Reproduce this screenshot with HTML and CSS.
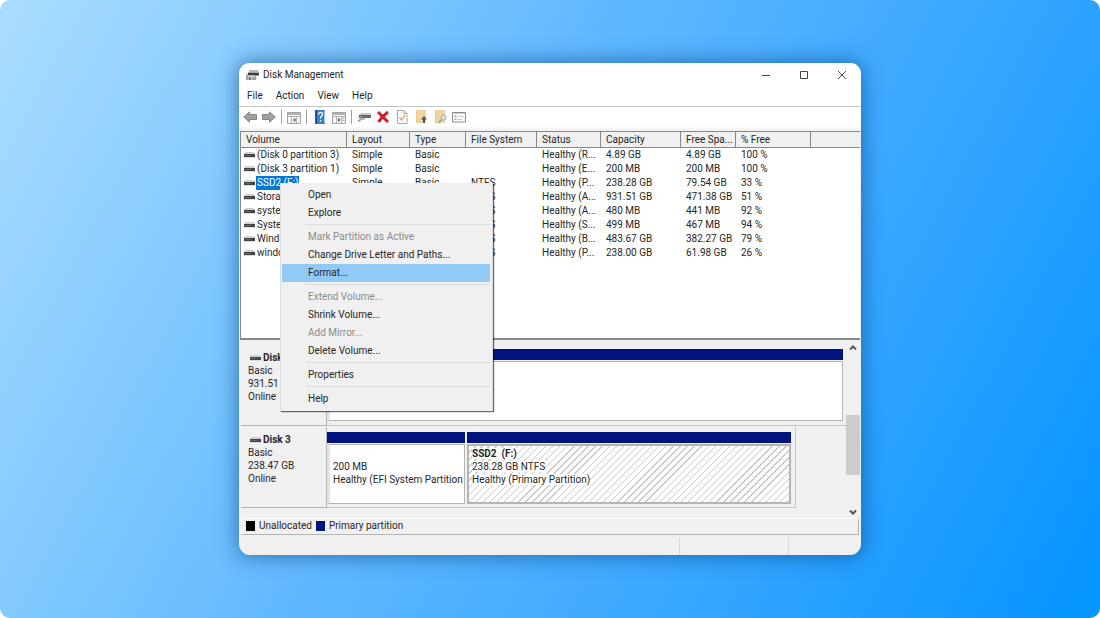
FILE: index.html
```html
<!DOCTYPE html>
<html lang="en">
<head>
<meta charset="utf-8">
<title>Disk Management</title>
<link rel="stylesheet" href="styles.css">
</head>
<body>
<svg width="0" height="0" class="defs" aria-hidden="true">
  <symbol id="drive" viewBox="0 0 11 6"><path d="M1 0h9l1 2H0z" fill="#d0d0d0"/><rect y="2" width="11" height="3" fill="#444"/><rect x="1" y="3" width="6" height="1" fill="#666"/><rect y="5" width="11" height="1" fill="#ddd"/></symbol>
</svg>
<main class="stage">
<div class="window">
  <header class="titlebar">
    <svg class="app-icon" viewBox="0 0 14 12"><path d="M4 0h9l1 3H2z" fill="#b9b9b9"/><path d="M2 3h12v3H2z" fill="#3d3d3d"/><path d="M1 6h9v5H1z" fill="#d4d4d4"/><path d="M0 5h2v6H0zM9 6h2v5H9z" fill="#9c9c9c"/><path d="M3 8h2v3H3zM7 8h1v3H7z" fill="#5a5a5a"/></svg>
    <h1 class="title">Disk Management</h1>
    <div class="controls">
      <button class="control" aria-label="Minimize"><svg viewBox="0 0 10 10"><path d="M1 5.5h8" /></svg></button>
      <button class="control" aria-label="Maximize"><svg viewBox="0 0 10 10"><path d="M1.5 1.5h7v7h-7z"/></svg></button>
      <button class="control" aria-label="Close"><svg viewBox="0 0 10 10"><path d="M1 1l8 8M9 1l-8 8"/></svg></button>
    </div>
  </header>
  <nav class="menubar">
    <button>File</button><button>Action</button><button>View</button><button>Help</button>
  </nav>
  <div class="toolbar">
    <button aria-label="Back"><svg viewBox="0 0 14 14"><path d="M.7 7 6.500 1.800V4.500h7v5h-7v2.700z" fill="#a0a0a0" stroke="#858585"/></svg></button>
    <button aria-label="Forward"><svg viewBox="0 0 14 14"><path d="M13.300 7 7.500 1.800V4.500h-7v5h7v2.700z" fill="#a0a0a0" stroke="#858585"/></svg></button>
    <span class="divider"></span>
    <button aria-label="Show console tree"><svg viewBox="0 0 14 14"><path d="M.5 2.500h13v11H.5z" fill="#f4f4f4" stroke="#a4a4a4"/><path d="M1 3h12v2H1z" fill="#b4b4b4"/><path d="M1 6.500h12M4.500 7v6M9.500 7v6" stroke="#b4b4b4"/><path d="M8.500 8v4L6 10z" fill="#555"/></svg></button>
    <span class="divider wide"></span>
    <button aria-label="Help topics"><svg viewBox="0 0 14 14"><path d="M2 0h10v14H2z" fill="#3b80c6"/><path d="M2 0h2v14H2z" fill="#24578f"/><path d="M11 1h1v12h-1z" fill="#9bc3e8"/><path d="M5.500 4.500c0-3 4.500-2.500 4 0C9.200 6 7.500 6 7.500 8.500M7.500 10v1.500" fill="none" stroke="#fff" stroke-width="1.300"/></svg></button>
    <button aria-label="Show action pane"><svg viewBox="0 0 14 14"><path d="M.5 2.500h13v11H.5z" fill="#f4f4f4" stroke="#a4a4a4"/><path d="M1 3h12v2H1z" fill="#b4b4b4"/><path d="M1 6.500h12M4.500 7v6M9.500 7v6" stroke="#b4b4b4"/><path d="M6 8v4l2.500-2z" fill="#555"/><path d="M10.500 8.500h2M10.500 10.500h2" stroke="#aaa"/></svg></button>
    <span class="divider"></span>
    <button aria-label="Rescan disks"><svg viewBox="0 0 14 14"><path d="M4 3h9l1 2H2z" fill="#c4c4c4"/><path d="M2 5h12v3H2z" fill="#666"/><path d="M3 6h2v1H3z" fill="#70b8d8"/><path d="M1 11.500 5 8.500h3" fill="none" stroke="#8ba7b3" stroke-width="2"/></svg></button>
    <button aria-label="Delete"><svg viewBox="0 0 14 14"><path d="M2 2c3 3 6 6 10 10M12 2C8 5 5 8 2.500 12" fill="none" stroke="#d01f2e" stroke-width="3"/></svg></button>
    <button aria-label="Properties"><svg viewBox="0 0 14 14"><path d="M2.500.5H9L12 3.500v10H2.500z" fill="#fbfbfb" stroke="#aaa"/><path d="M9 .5v3h3" fill="none" stroke="#aaa"/><path d="M4.500 7.500 6.500 10 10 5" fill="none" stroke="#e0a060" stroke-width="1.300"/></svg></button>
    <button aria-label="Up one level"><svg viewBox="0 0 14 14"><path d="M2 0h10v13H2z" fill="#f0d3a0"/><path d="M2.500 0v13" stroke="#dfbd80" stroke-dasharray="1 1"/><path d="M10 6 13 9.500h-2V13H9V9.500H7z" fill="#555"/></svg></button>
    <button aria-label="Find"><svg viewBox="0 0 14 14"><path d="M2 0h10v13H2z" fill="#f0d3a0"/><path d="M2.500 0v13" stroke="#dfbd80" stroke-dasharray="1 1"/><path d="M8.500 9.500 5.500 13" stroke="#999" stroke-width="1.500"/><circle cx="10.500" cy="7.500" r="2.500" fill="#d6e4ee" stroke="#98acba"/></svg></button>
    <button aria-label="Options"><svg viewBox="0 0 14 14"><path d="M.5 2.500h13v9.500H.5z" fill="#fafafa" stroke="#8c8c8c"/><path d="M1 3h12v1H1z" fill="#c0d0dc"/><path d="M2.500 5.500h2v1.500h-2zM2.500 8.500h2V10h-2z" fill="#6cb0dc"/><path d="M6 6.500h6M6 9.500h4" stroke="#ccc"/></svg></button>
  </div>

  <section class="volumes">
    <table>
      <colgroup><col class="c-vol"><col class="c-lay"><col class="c-type"><col class="c-fs"><col class="c-stat"><col class="c-cap"><col class="c-free"><col class="c-pct"><col></colgroup>
      <thead><tr><th>Volume</th><th>Layout</th><th>Type</th><th>File System</th><th>Status</th><th>Capacity</th><th>Free Spa...</th><th>% Free</th><th></th></tr></thead>
      <tbody>
        <tr><td><svg class="drive"><use href="#drive"/></svg><span>(Disk 0 partition 3)</span></td><td>Simple</td><td>Basic</td><td></td><td>Healthy (R...</td><td>4.89 GB</td><td>4.89 GB</td><td>100 %</td><td></td></tr>
        <tr><td><svg class="drive"><use href="#drive"/></svg><span>(Disk 3 partition 1)</span></td><td>Simple</td><td>Basic</td><td></td><td>Healthy (E...</td><td>200 MB</td><td>200 MB</td><td>100 %</td><td></td></tr>
        <tr><td><svg class="drive"><use href="#drive"/></svg><span class="selected">SSD2 (F:)</span></td><td>Simple</td><td>Basic</td><td>NTFS</td><td>Healthy (P...</td><td>238.28 GB</td><td>79.54 GB</td><td>33 %</td><td></td></tr>
        <tr><td><svg class="drive"><use href="#drive"/></svg><span>Storage</span></td><td>Simple</td><td>Basic</td><td>NTFS</td><td>Healthy (A...</td><td>931.51 GB</td><td>471.38 GB</td><td>51 %</td><td></td></tr>
        <tr><td><svg class="drive"><use href="#drive"/></svg><span>system</span></td><td>Simple</td><td>Basic</td><td>NTFS</td><td>Healthy (A...</td><td>480 MB</td><td>441 MB</td><td>92 %</td><td></td></tr>
        <tr><td><svg class="drive"><use href="#drive"/></svg><span>System</span></td><td>Simple</td><td>Basic</td><td>NTFS</td><td>Healthy (S...</td><td>499 MB</td><td>467 MB</td><td>94 %</td><td></td></tr>
        <tr><td><svg class="drive"><use href="#drive"/></svg><span>Windows</span></td><td>Simple</td><td>Basic</td><td>NTFS</td><td>Healthy (B...</td><td>483.67 GB</td><td>382.27 GB</td><td>79 %</td><td></td></tr>
        <tr><td><svg class="drive"><use href="#drive"/></svg><span>windows</span></td><td>Simple</td><td>Basic</td><td>NTFS</td><td>Healthy (P...</td><td>238.00 GB</td><td>61.98 GB</td><td>26 %</td><td></td></tr>
      </tbody>
    </table>
  </section>

  <section class="disks">
    <div class="disk-list">
      <div class="disk tall">
        <div class="disk-label"><h2><svg class="drive"><use href="#drive"/></svg>Disk 2</h2><p>Basic</p><p>931.51 GB</p><p>Online</p></div>
        <div class="partitions">
          <div class="partition"><div class="stripe"></div><div class="part-body"></div></div>
        </div>
      </div>
      <div class="disk">
        <div class="disk-label"><h2><svg class="drive"><use href="#drive"/></svg>Disk 3</h2><p>Basic</p><p>238.47 GB</p><p>Online</p></div>
        <div class="partitions">
          <div class="partition efi"><div class="stripe"></div><div class="part-body"><p>&nbsp;</p><p>200 MB</p><p>Healthy (EFI System Partition</p></div></div>
          <div class="partition"><div class="stripe"></div><div class="part-body hatched"><p><b>SSD2&nbsp; (F:)</b></p><p><span>238.28 GB NTFS</span></p><p><span>Healthy (Primary Partition)</span></p></div></div>
        </div>
      </div>
    </div>
    <div class="scrollbar">
      <button aria-label="Scroll up"><svg viewBox="0 0 8 6"><path d="M1 4.500 4 1.500l3 3"/></svg></button>
      <div class="track"><div class="thumb"></div></div>
      <button aria-label="Scroll down"><svg viewBox="0 0 8 6"><path d="M1 1.500l3 3 3-3"/></svg></button>
    </div>
  </section>
  <div class="legend"><i class="swatch black"></i><span>Unallocated</span><i class="swatch"></i><span>Primary partition</span></div>
  <footer class="statusbar"><span></span><span></span><span></span></footer>

  <div class="context-menu" role="menu">
    <button role="menuitem">Open</button>
    <button role="menuitem">Explore</button>
    <hr>
    <button role="menuitem" disabled>Mark Partition as Active</button>
    <button role="menuitem">Change Drive Letter and Paths...</button>
    <button role="menuitem" class="active">Format...</button>
    <hr>
    <button role="menuitem" disabled>Extend Volume...</button>
    <button role="menuitem">Shrink Volume...</button>
    <button role="menuitem" disabled>Add Mirror...</button>
    <button role="menuitem">Delete Volume...</button>
    <hr>
    <button role="menuitem">Properties</button>
    <hr>
    <button role="menuitem">Help</button>
  </div>
</div>
</main>
</body>
</html>
```
FILE: styles.css
```css
* { box-sizing: border-box; }
body { margin: 0; background: #fff; }
h1, h2, p { margin: 0; font-size: inherit; font-weight: normal; }
button { margin: 0; padding: 0; border: 0; background: none; color: inherit; font: inherit; }
svg { display: block; }
.defs { position: absolute; }

.stage {
  display: flex;
  align-items: center;
  justify-content: center;
  min-height: 100vh;
  border-radius: 10px;
  background: linear-gradient(118deg, #aaddff 0%, #62b9ff 42%, #3ba8ff 68%, #0795ff 98%);
}
.window {
  position: relative;
  width: 100%;
  max-width: 622px;
  overflow: hidden;
  border-radius: 11px;
  background: #f0f0f0;
  color: #262626;
  font: 10px/14px Roboto, "Open Sans", sans-serif;
  box-shadow: 0 0 20px 2px rgba(0, 60, 120, .55);
}

.titlebar { display: flex; align-items: center; height: 24px; padding-left: 7px; background: #fff; }
.app-icon { width: 13px; height: 11px; margin-right: 4px; }
.title { flex: 1; }
.controls { display: flex; }
.control { display: grid; place-items: center; width: 38px; height: 24px; }
.control svg { width: 10px; height: 10px; fill: none; stroke: #444; }

.menubar { display: flex; gap: 13px; height: 20px; padding: 0 8px 1px; border-bottom: 1px solid #c4c4c4; background: #fff; }
.toolbar { display: flex; align-items: center; gap: 5px; height: 24px; padding: 0 4px 4px; background: linear-gradient(#fff 75%, #f0f0f0); }
.toolbar svg { width: 14px; height: 14px; }
.divider { width: 1px; height: 14px; background: #a0a0a0; }
.divider.wide { margin-right: 1px; }

.volumes { height: 209px; margin: 0 1px; border: 1px solid #888; border-width: 1px 0 2px 1px; background: #fff; }
table { width: 100%; table-layout: fixed; border-collapse: separate; border-spacing: 0; }
.c-vol { width: 106px; }
.c-lay { width: 63px; }
.c-type { width: 56px; }
.c-fs { width: 71px; }
.c-stat { width: 64px; }
.c-cap { width: 80px; }
.c-free { width: 55px; }
.c-pct { width: 75px; }
th, td { padding: 0 0 0 5px; text-align: left; font-weight: normal; white-space: nowrap; overflow: hidden; }
th { height: 16px; border-right: 1px solid #888; border-bottom: 1px solid #888; background: #f0f0f0; }
th:last-child { border-right: 0; }
td:first-child { display: flex; align-items: center; padding-left: 3px; }
tbody tr { height: 14px; }
.drive { width: 11px; height: 6px; flex: none; }
td span { padding: 0 1px; margin-left: 1px; }
.selected { background: #0078d7; color: #fff; }

.disks { display: flex; height: 178px; padding: 2px 1px 0 2px; }
.disk-list { flex: 1; }
.disk { display: flex; }
.disk + .disk { margin-top: 1px; }
.disk-label { width: 86px; padding: 6px 0 0 7px; border: 1px solid #b5b5b5; border-width: 0 1px 1px 0; line-height: 13px; }
.disk-label h2 { display: flex; align-items: center; gap: 2px; padding-left: 2px; font-weight: bold; }
.partitions { display: flex; gap: 2px; width: 469px; height: 81px; padding: 5px 4px 3px 0; border: 1px solid #c4c4c4; border-width: 0 1px 1px 0; }
.tall .disk-label { padding-top: 9px; }
.tall .partitions { width: auto; flex: 1; height: 84px; padding: 7px 3px 4px 0; border-right: 0; }
.partition { display: flex; flex-direction: column; flex: 1; line-height: 13px; }
.efi { flex: none; width: 138px; }
.stripe { height: 11px; background: #00137f; }
.part-body { flex: 1; margin-top: 1px; padding: 2px 0 0 3px; border: 1px solid #b5b5b5; border-left: 3px solid #e4e4e4; background: #fff; white-space: nowrap; overflow: hidden; }
.hatched { padding-top: 1px; border: 2px solid #b5b5b5; background: repeating-linear-gradient(135deg, #fff 0 4px, #cacaca 4px 5px); }
.hatched b, .hatched span { background: #fff; }

.scrollbar { display: flex; flex-direction: column; width: 14px; }
.scrollbar button { display: grid; place-items: center; height: 12px; }
.scrollbar svg { width: 8px; height: 6px; fill: none; stroke: #555; stroke-width: 2; }
.track { flex: 1; padding-top: 61px; }
.thumb { height: 60px; background: #cdcdcd; }

.legend { display: flex; align-items: center; height: 17px; margin: 0 2px; padding: 0 0 1px 4px; border: 1px solid #fff; border-color: #fff #b5b5b5 #b5b5b5 #fff; }
.swatch { width: 9px; height: 10px; margin-right: 4px; background: #00137f; }
.swatch.black { background: #000; }
.legend span { margin-right: 4px; }
.statusbar { display: grid; grid-template-columns: 1fr 109px 73px; height: 20px; padding-top: 3px; }
.statusbar span + span { border-left: 1px solid #d8d8d8; }

.context-menu {
  position: absolute;
  top: 120px;
  left: 41px;
  width: 213px;
  padding: 3px 2px 3px 1px;
  border: 1px solid #ddd;
  border-width: 0 1px 0 1px;
  background: #f0f0f0;
  box-shadow: 1px 1px 1px 0 rgba(0, 0, 0, .6);
}
.context-menu button { display: block; width: 100%; height: 18px; padding-left: 26px; text-align: left; }
.context-menu button:disabled { color: #8b8b8b; }
.context-menu .active { background: #91c9f7; }
.context-menu hr { height: 1px; margin: 2px 0 3px 23px; border: 0; background: #dcdcdc; }
```
